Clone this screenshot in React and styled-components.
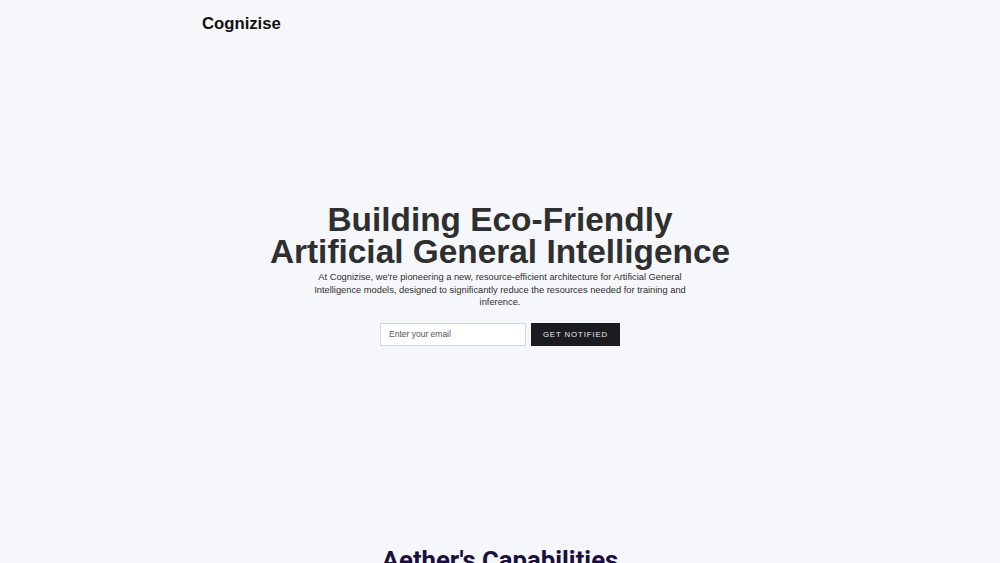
import React from "react";
import styled, { createGlobalStyle } from "styled-components";

const Global = createGlobalStyle`
  html, body { margin: 0; padding: 0; }
  body {
    background: #f6f7fb;
    font-family: "Liberation Sans", Arial, sans-serif;
    color: #333;
  }
  * { box-sizing: border-box; }
`;

const Header = styled.header`
  width: 596px;
  margin: 0 auto;
  height: 47px;
  display: flex;
  align-items: center;
`;

const Logo = styled.div`
  font-size: 16.7px;
  font-weight: 700;
  color: #111;
`;

const Hero = styled.section`
  height: 453px;
  display: flex;
  flex-direction: column;
  align-items: center;
  justify-content: center;
  text-align: center;
`;

const Title = styled.h1`
  margin: 3px 0 0;
  font-size: 33.4px;
  line-height: 32px;
  font-weight: 700;
  color: #2f2f2f;
`;

const Lead = styled.p`
  margin: 3px 0 0;
  width: 380px;
  font-size: 9.3px;
  line-height: 12.5px;
  color: #2e2e2e;
`;

const Form = styled.form`
  display: flex;
  gap: 5px;
  margin-top: 14px;
`;

const Input = styled.input`
  width: 146px;
  height: 23px;
  border: 1px solid #d8d8dc;
  background: #fff;
  padding: 0 8px;
  font-family: "Liberation Sans", Arial, sans-serif;
  font-size: 8.5px;
  color: #333;
  outline: none;
  &::placeholder { color: #555; }
`;

const Button = styled.button`
  width: 89px;
  height: 23px;
  border: none;
  background: #1b1c1f;
  color: #ececee;
  font-family: "Liberation Sans", Arial, sans-serif;
  font-size: 7.8px;
  letter-spacing: 0.9px;
  text-transform: uppercase;
  cursor: pointer;
`;

const Capabilities = styled.section`
  padding-top: 45px;
  display: flex;
  justify-content: center;
`;

const SectionTitle = styled.h2`
  margin: 0;
  font-family: Roboto, "Liberation Sans", sans-serif;
  font-size: 25.7px;
  font-weight: 700;
  color: #1a0f3d;
`;

export default function App() {
  return (
    <>
      <Global />
      <Header>
        <Logo>Cognizise</Logo>
      </Header>
      <Hero>
        <Title>
          Building Eco-Friendly
          <br />
          Artificial General Intelligence
        </Title>
        <Lead>
          At Cognizise, we're pioneering a new, resource-efficient architecture for Artificial
          General Intelligence models, designed to significantly reduce the resources needed for
          training and inference.
        </Lead>
        <Form onSubmit={(e) => e.preventDefault()}>
          <Input type="email" placeholder="Enter your email" />
          <Button type="submit">Get Notified</Button>
        </Form>
      </Hero>
      <Capabilities>
        <SectionTitle>Aether's Capabilities</SectionTitle>
      </Capabilities>
    </>
  );
}
